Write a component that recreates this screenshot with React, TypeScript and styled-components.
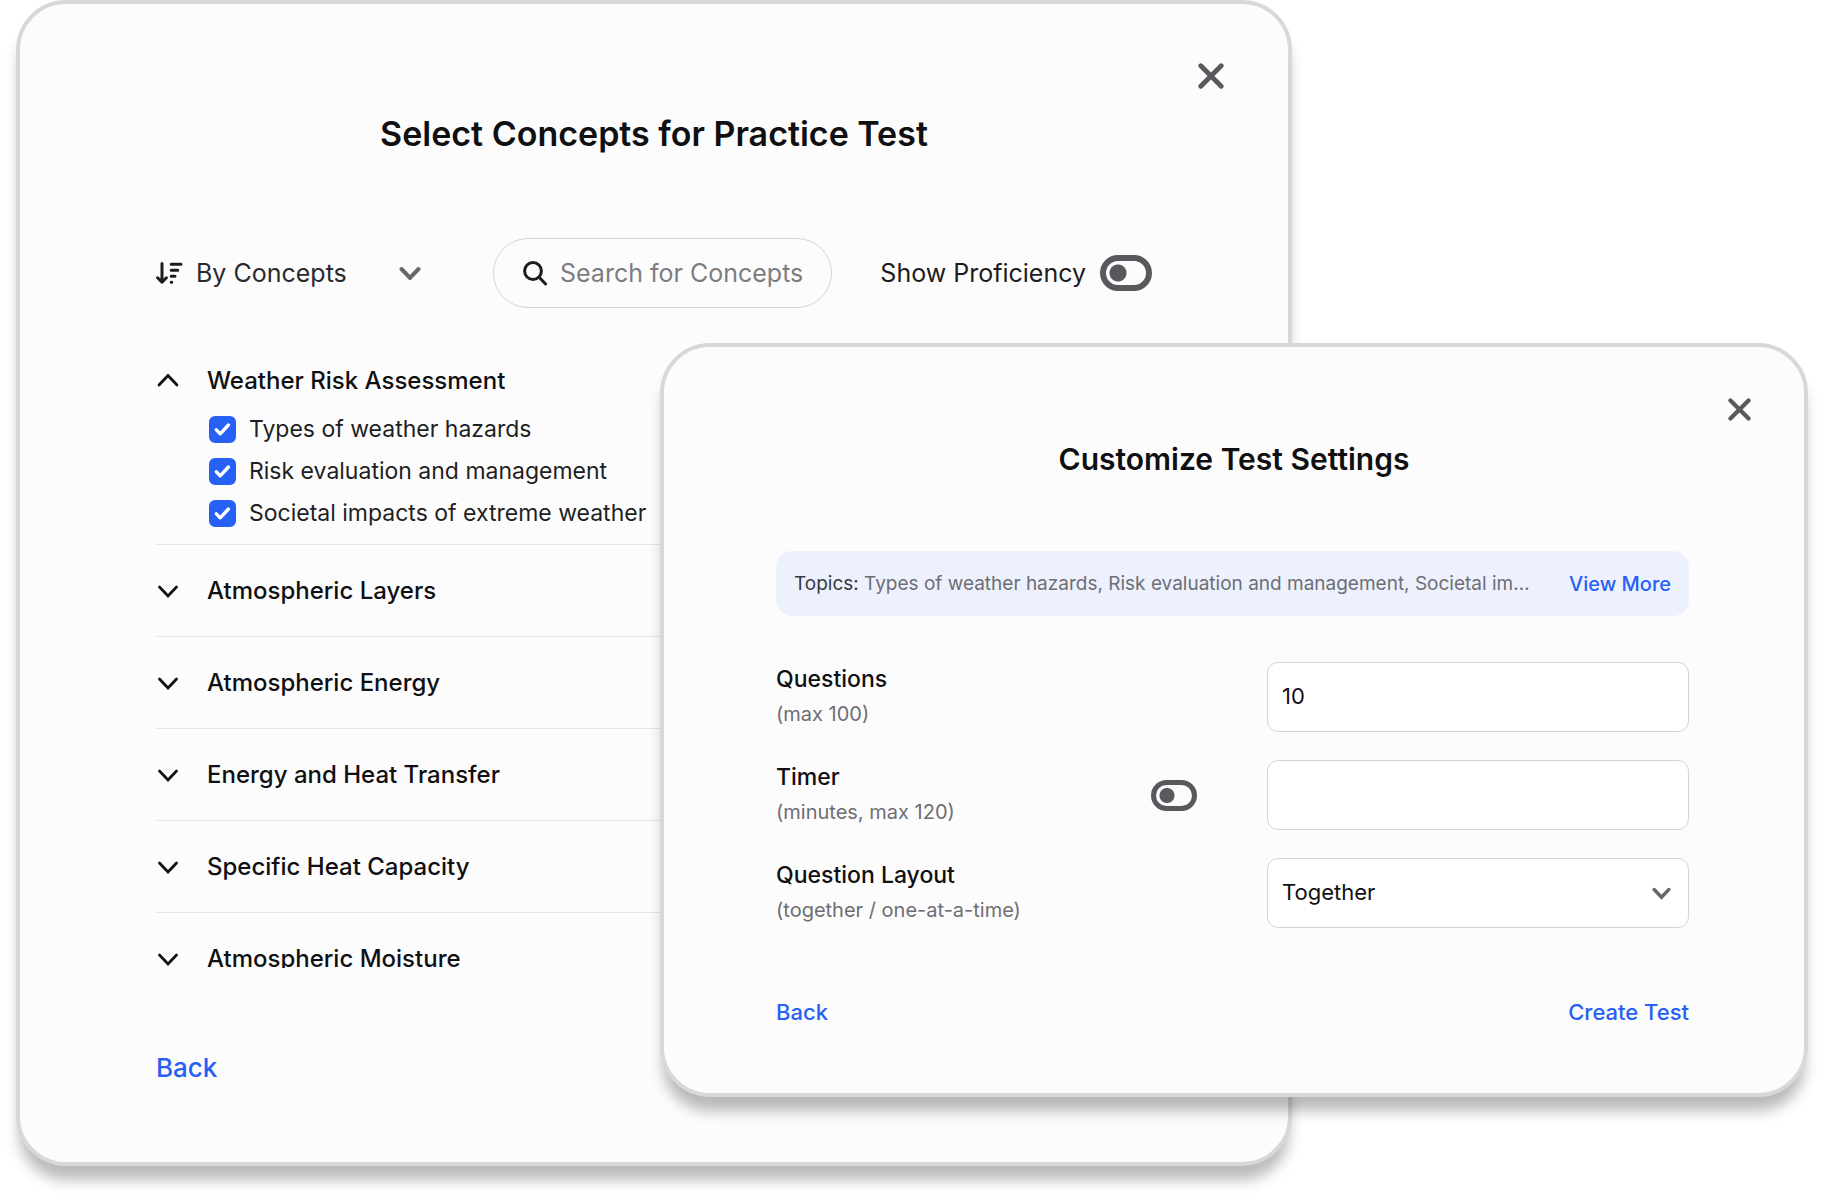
import React, { useState } from "react";
import styled, { createGlobalStyle } from "styled-components";

const GlobalStyle = createGlobalStyle`
  *, *::before, *::after { box-sizing: border-box; }
  body {
    margin: 0;
    background: #ffffff;
    color: #101012;
    font-family: Inter, "Open Sans", sans-serif;
  }
  button, input, select { font: inherit; color: inherit; }
`;

const Stage = styled.main`
  display: grid;
  grid-template-columns: 644fr 632fr 516fr;
  align-items: start;
  padding: 0 16px 32px;
`;

const Card = styled.section`
  display: flex;
  flex-direction: column;
  grid-row: 1;
  border: 4px solid #d7d8dc;
  border-radius: 50px;
  background: #fcfcfd;
  box-shadow: 0 17px 14px -3px rgba(0, 0, 0, 0.27);
`;

const ConceptsCard = styled(Card)`
  grid-column: 1 / 3;
`;

const SettingsCard = styled(Card)`
  grid-column: 2 / 4;
  margin-top: 343px;
`;

const CloseRow = styled.div<{ $compact?: boolean }>`
  display: flex;
  justify-content: flex-end;
  padding: ${(p) => (p.$compact ? "46px 49px 0" : "56px 61px 0")};
`;

const IconButton = styled.button`
  display: flex;
  align-items: center;
  justify-content: center;
  width: 32px;
  height: 32px;
  padding: 0;
  border: 0;
  background: none;
  color: #58595d;
  cursor: pointer;
`;

const Title = styled.h1<{ $compact?: boolean }>`
  margin: ${(p) => (p.$compact ? 10 : 18)}px 0 0;
  font-size: ${(p) => (p.$compact ? 30 : 34)}px;
  line-height: 48px;
  font-weight: 600;
  text-align: center;
`;

const ConceptsBody = styled.div`
  padding: 80px 136px 74px;
`;

const Toolbar = styled.div`
  display: grid;
  grid-template-columns: minmax(0, 337fr) minmax(0, 339fr) minmax(0, 320fr);
  align-items: center;
`;

const SortField = styled.div`
  display: grid;
  grid-template-columns: 40px 203px 22px;
  align-items: center;
`;

const SortSelect = styled.select`
  grid-column: 2 / 4;
  grid-row: 1;
  height: 40px;
  padding: 0;
  border: 0;
  appearance: none;
  background: none;
  font-size: 25px;
  color: #2a2a2e;
`;

const SortChevron = styled.span`
  display: flex;
  grid-column: 3;
  grid-row: 1;
  color: #67686c;
  pointer-events: none;
`;

const SearchField = styled.label`
  display: flex;
  align-items: center;
  gap: 12px;
  height: 70px;
  padding: 0 28px;
  border: 1px solid #d4d4d8;
  border-radius: 35px;
`;

const SearchInput = styled.input`
  flex: 1;
  min-width: 0;
  height: 40px;
  padding: 0;
  border: 0;
  outline: 0;
  background: none;
  font-size: 25px;

  &::placeholder {
    color: #7c7c80;
    opacity: 1;
  }
`;

const SwitchLabel = styled.label`
  display: flex;
  align-items: center;
  justify-content: flex-end;
  gap: 14px;
  font-size: 25px;
  white-space: nowrap;
  color: #1c1c20;
`;

const Switch = styled.input<{ $compact?: boolean }>`
  flex: none;
  width: ${(p) => (p.$compact ? 46 : 52)}px;
  height: ${(p) => (p.$compact ? 31 : 36)}px;
  margin: 0;
  border: ${(p) => (p.$compact ? 5 : 6)}px solid #58595d;
  border-radius: 18px;
  appearance: none;
  background: radial-gradient(
    circle at ${(p) => (p.$compact ? 11 : 12)}px 50%,
    #58595d ${(p) => (p.$compact ? 7 : 8)}px,
    transparent ${(p) => (p.$compact ? 8 : 9)}px
  );
  cursor: pointer;

  &:checked {
    transform: scaleX(-1);
  }
`;

const ConceptList = styled.ul`
  max-height: 612px;
  margin: 48px 0 0;
  padding: 0;
  overflow-y: auto;
  scrollbar-width: none;
  list-style: none;
`;

const ConceptItem = styled.li`
  border-bottom: 1px solid #e6e6e9;
`;

const ConceptToggle = styled.button<{ $open: boolean }>`
  display: flex;
  align-items: center;
  gap: 28px;
  width: 100%;
  height: ${(p) => (p.$open ? 48 : 91)}px;
  padding: 0 0 0 1px;
  border: 0;
  background: none;
  font-size: 24px;
  font-weight: 500;
  text-align: left;
  cursor: pointer;
`;

const TopicGroup = styled.div`
  padding: 4px 0 10px 53px;
`;

const TopicLabel = styled.label`
  display: flex;
  align-items: center;
  gap: 13px;
  height: 42px;
  font-size: 23px;
  line-height: 28px;
  color: #1f1f23;
`;

const CheckFrame = styled.span`
  display: grid;
  place-items: center;
  width: 27px;
  height: 27px;

  > * {
    grid-area: 1 / 1;
  }

  svg {
    pointer-events: none;
  }
`;

const CheckInput = styled.input`
  width: 27px;
  height: 27px;
  margin: 0;
  border: 2px solid #2760f5;
  border-radius: 6px;
  appearance: none;

  &:checked {
    background: #2760f5;
  }
`;

const TextButton = styled.button<{ $size: number }>`
  padding: 0;
  border: 0;
  background: none;
  font-size: ${(p) => p.$size}px;
  line-height: 40px;
  font-weight: 500;
  white-space: nowrap;
  color: #2760f5;
  cursor: pointer;
`;

const ConceptsFooter = styled.footer`
  margin-top: 80px;
`;

const SettingsBody = styled.div`
  padding: 68px 115px 61px 112px;
`;

const TopicsBar = styled.div`
  display: flex;
  align-items: center;
  gap: 28px;
  height: 65px;
  padding: 0 18px;
  border-radius: 16px;
  background: #edf1fe;
`;

const TopicsText = styled.p`
  flex: 1;
  min-width: 0;
  margin: 0;
  overflow: hidden;
  font-size: 19px;
  line-height: 32px;
  text-overflow: ellipsis;
  white-space: nowrap;
  color: #6d6e73;
`;

const TopicsLead = styled.span`
  color: #38393d;
`;

const Fields = styled.div`
  display: grid;
  gap: 28px;
  margin-top: 46px;
`;

const FieldRow = styled.div`
  display: grid;
  grid-template-columns: 375fr 116fr 422fr;
  align-items: center;
`;

const FieldLabel = styled.label`
  display: grid;
  font-size: 23px;
  line-height: 35px;
  font-weight: 500;
`;

const FieldHint = styled.small`
  font-size: 20px;
  font-weight: 400;
  color: #6d6e73;
`;

const TextBox = styled.input`
  grid-column: 3;
  width: 100%;
  height: 70px;
  padding: 0 14px 2px;
  border: 1px solid #d4d4d8;
  border-radius: 11px;
  background: #ffffff;
  font-size: 22px;
`;

const SelectFrame = styled.div`
  display: grid;
  grid-column: 3;
  grid-template-columns: 1fr 37px;
  align-items: center;
  color: #67686c;

  svg {
    grid-column: 2;
    grid-row: 1;
    pointer-events: none;
  }
`;

const SelectBox = styled.select`
  grid-column: 1 / 3;
  grid-row: 1;
  height: 70px;
  padding: 0 14px 2px;
  border: 1px solid #d4d4d8;
  border-radius: 11px;
  appearance: none;
  background: #ffffff;
  font-size: 22px;
  color: #101012;
`;

const SettingsFooter = styled.footer`
  display: flex;
  justify-content: space-between;
  margin-top: 64px;
`;

function CrossIcon({ size }: { size: number }) {
  return (
    <svg width={size} height={size} viewBox="0 0 26 26" fill="none" stroke="currentColor" strokeWidth="4.8" strokeLinecap="round" aria-hidden="true">
      <path d="M2.8 2.8 23.2 23.2M23.2 2.8 2.8 23.2" />
    </svg>
  );
}

function ChevronIcon({ width, weight, up }: { width: number; weight: number; up?: boolean }) {
  return (
    <svg width={width} height={14} viewBox="0 0 22 14" fill="none" stroke="currentColor" strokeWidth={weight} strokeLinecap="round" aria-hidden="true">
      <path d={up ? "M2 12 11 2.6 20 12" : "M2.5 3 11 11.9 19.5 3"} />
    </svg>
  );
}

function SortIcon() {
  return (
    <svg width="27" height="22" viewBox="0 0 27 22" fill="none" stroke="#1c1c20" strokeWidth="3" strokeLinecap="round" strokeLinejoin="round" aria-hidden="true">
      <path d="M6 1.6V20M1.6 15.8 6 20.2 10.4 15.8" />
      <path d="M15.2 2.2H25M15.2 8.2H21.8M15.2 14.2H19M15.2 20.2H15.8" />
    </svg>
  );
}

function SearchIcon() {
  return (
    <svg width="26" height="26" viewBox="0 0 26 26" fill="none" stroke="#1c1c20" strokeWidth="3" strokeLinecap="round" aria-hidden="true">
      <circle cx="11" cy="11" r="8.4" />
      <path d="m17.2 17.2 6.4 6.8" />
    </svg>
  );
}

function CheckIcon() {
  return (
    <svg width="17" height="13" viewBox="0 0 17 13" fill="none" stroke="#ffffff" strokeWidth="3.4" strokeLinecap="round" strokeLinejoin="round" aria-hidden="true">
      <path d="m2.4 6.8 3.8 4L14.4 2" />
    </svg>
  );
}

const concepts = [
  {
    name: "Weather Risk Assessment",
    topics: ["Types of weather hazards", "Risk evaluation and management", "Societal impacts of extreme weather"],
  },
  { name: "Atmospheric Layers", topics: [] },
  { name: "Atmospheric Energy", topics: [] },
  { name: "Energy and Heat Transfer", topics: [] },
  { name: "Specific Heat Capacity", topics: [] },
  { name: "Atmospheric Moisture", topics: [] },
];

function Concept({ name, topics }: { name: string; topics: string[] }) {
  const open = topics.length > 0;
  return (
    <ConceptItem>
      <ConceptToggle type="button" $open={open} aria-expanded={open}>
        <ChevronIcon width={22} weight={2.8} up={open} />
        {name}
      </ConceptToggle>
      {open && (
        <TopicGroup>
          {topics.map((topic) => (
            <TopicLabel key={topic}>
              <CheckFrame>
                <CheckInput type="checkbox" defaultChecked />
                <CheckIcon />
              </CheckFrame>
              {topic}
            </TopicLabel>
          ))}
        </TopicGroup>
      )}
    </ConceptItem>
  );
}

export default function App() {
  const [questions, setQuestions] = useState("10");

  return (
    <>
      <GlobalStyle />
      <Stage>
        <ConceptsCard aria-labelledby="concepts-title">
          <CloseRow>
            <IconButton type="button" aria-label="Close">
              <CrossIcon size={26} />
            </IconButton>
          </CloseRow>
          <Title id="concepts-title">Select Concepts for Practice Test</Title>
          <ConceptsBody>
            <Toolbar>
              <SortField>
                <SortIcon />
                <SortSelect aria-label="Sort order">
                  <option>By Concepts</option>
                </SortSelect>
                <SortChevron>
                  <ChevronIcon width={22} weight={4} />
                </SortChevron>
              </SortField>
              <SearchField>
                <SearchIcon />
                <SearchInput type="text" placeholder="Search for Concepts" aria-label="Search for Concepts" />
              </SearchField>
              <SwitchLabel>
                Show Proficiency
                <Switch type="checkbox" role="switch" />
              </SwitchLabel>
            </Toolbar>
            <ConceptList>
              {concepts.map((concept) => (
                <Concept key={concept.name} {...concept} />
              ))}
            </ConceptList>
            <ConceptsFooter>
              <TextButton type="button" $size={26}>Back</TextButton>
            </ConceptsFooter>
          </ConceptsBody>
        </ConceptsCard>

        <SettingsCard aria-labelledby="settings-title">
          <CloseRow $compact>
            <IconButton type="button" aria-label="Close">
              <CrossIcon size={23} />
            </IconButton>
          </CloseRow>
          <Title as="h2" id="settings-title" $compact>Customize Test Settings</Title>
          <SettingsBody>
            <TopicsBar>
              <TopicsText>
                <TopicsLead>Topics:</TopicsLead> {concepts[0].topics.join(", ")}
              </TopicsText>
              <TextButton type="button" $size={20}>View More</TextButton>
            </TopicsBar>
            <Fields>
              <FieldRow>
                <FieldLabel htmlFor="questions">
                  Questions
                  <FieldHint>(max 100)</FieldHint>
                </FieldLabel>
                <TextBox id="questions" type="text" inputMode="numeric" value={questions} onChange={(e) => setQuestions(e.target.value)} />
              </FieldRow>
              <FieldRow>
                <FieldLabel htmlFor="timer">
                  Timer
                  <FieldHint>(minutes, max 120)</FieldHint>
                </FieldLabel>
                <Switch $compact type="checkbox" role="switch" aria-label="Use timer" />
                <TextBox id="timer" type="text" inputMode="numeric" />
              </FieldRow>
              <FieldRow>
                <FieldLabel htmlFor="layout">
                  Question Layout
                  <FieldHint>(together / one-at-a-time)</FieldHint>
                </FieldLabel>
                <SelectFrame>
                  <SelectBox id="layout">
                    <option>Together</option>
                    <option>One-at-a-time</option>
                  </SelectBox>
                  <ChevronIcon width={19} weight={4} />
                </SelectFrame>
              </FieldRow>
            </Fields>
            <SettingsFooter>
              <TextButton type="button" $size={22}>Back</TextButton>
              <TextButton type="button" $size={22}>Create Test</TextButton>
            </SettingsFooter>
          </SettingsBody>
        </SettingsCard>
      </Stage>
    </>
  );
}
